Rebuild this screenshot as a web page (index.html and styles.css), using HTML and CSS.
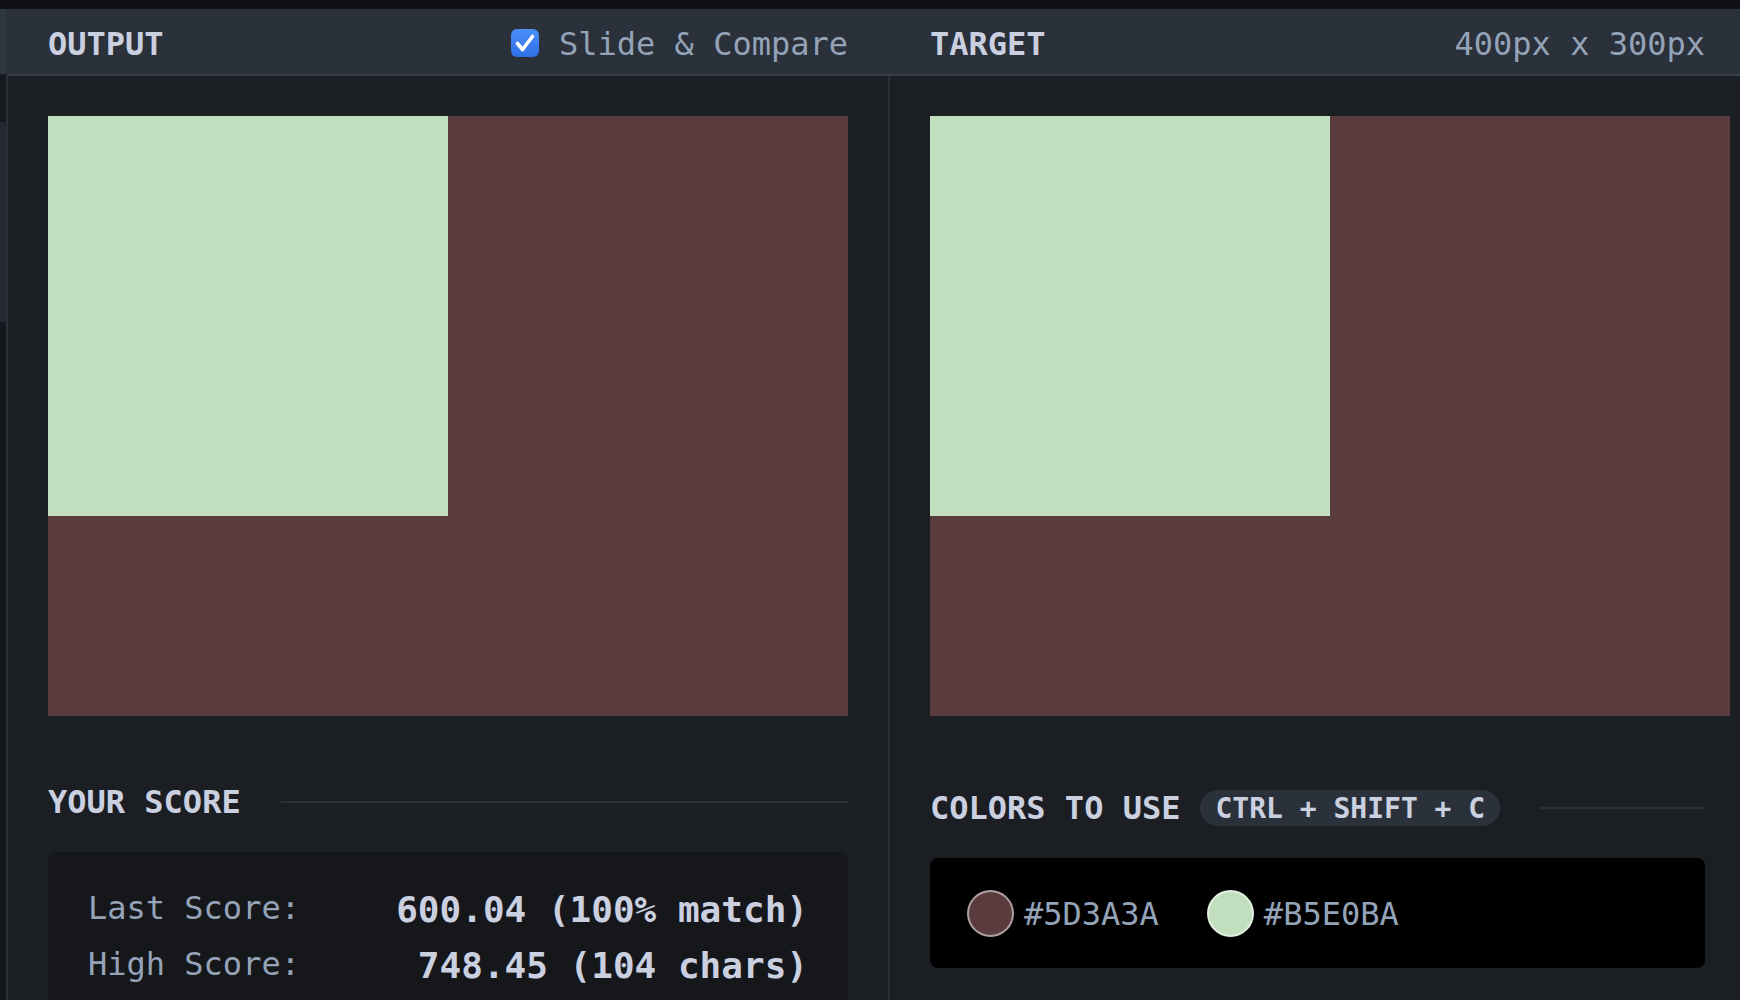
FILE: index.html
```html
<!DOCTYPE html>
<html lang="en">
<head>
<meta charset="utf-8">
<title>CSS Battle</title>
<link rel="stylesheet" href="styles.css">
</head>
<body>
<div class="topbar"></div>
<div class="app">
  <div class="rail">
    <div class="rail-top"></div>
    <div class="rail-gap"></div>
    <div class="rail-item"></div>
  </div>
  <div class="main">
    <div class="headers">
      <div class="head head-left">
        <span class="title">OUTPUT</span>
        <label class="toggle">
          <span class="check">
            <svg width="28" height="28" viewBox="0 0 28 28"><path d="M6.5 14.5 L11.5 20.5 L21.5 7.5" fill="none" stroke="#fff" stroke-width="3.6" stroke-linecap="round" stroke-linejoin="round"/></svg>
          </span>
          <span>Slide &amp; Compare</span>
        </label>
      </div>
      <div class="head head-right">
        <span class="title">TARGET</span>
        <span class="dims">400px x 300px</span>
      </div>
    </div>
    <div class="panels">
      <section class="panel panel-left">
        <div class="canvas"><div class="square"></div></div>
        <div class="section-head score-head">
          <h2>YOUR SCORE</h2>
          <div class="rule"></div>
        </div>
        <div class="score-box">
          <div class="score-row"><span class="label">Last Score:</span><span class="value">600.04 (100% match)</span></div>
          <div class="score-row"><span class="label">High Score:</span><span class="value">748.45 (104 chars)</span></div>
        </div>
      </section>
      <section class="panel panel-right">
        <div class="canvas"><div class="square"></div></div>
        <div class="section-head colors-head">
          <h2>COLORS TO USE <span class="kbd">CTRL + SHIFT + C</span></h2>
          <div class="rule"></div>
        </div>
        <div class="colors-box">
          <div class="color"><span class="swatch swatch-brown"></span><span>#5D3A3A</span></div>
          <div class="color"><span class="swatch swatch-green"></span><span>#B5E0BA</span></div>
        </div>
      </section>
    </div>
  </div>
</div>
</body>
</html>
```

FILE: styles.css
```css
html, body {
  margin: 0;
  padding: 0;
}

body {
  background: #1b1e22;
  font-family: "DejaVu Sans Mono", "Liberation Mono", monospace;
  height: 1000px;
  overflow: hidden;
}

.topbar {
  height: 9px;
  background: #0f1117;
}

.app {
  display: flex;
  height: 991px;
}

.rail {
  width: 6px;
  flex-shrink: 0;
  display: flex;
  flex-direction: column;
  background: #15171c;
}

.rail-top {
  height: 65px;
  background: #2e3740;
}

.rail-gap {
  height: 48px;
  background: #16191e;
}

.rail-item {
  height: 200px;
  background: #272733;
}

.main {
  flex: 1;
  min-width: 0;
  border-left: 2px solid #2b3038;
  display: flex;
  flex-direction: column;
}

.headers {
  display: flex;
  height: 65px;
  flex-shrink: 0;
  background: #2a313a;
  border-bottom: 2px solid #363e48;
}

.head {
  display: flex;
  align-items: center;
  justify-content: space-between;
  box-sizing: border-box;
  padding-top: 4px;
}

.head-left {
  width: 882px;
  padding-left: 40px;
  padding-right: 42px;
}

.head-right {
  flex: 1;
  padding-left: 40px;
  padding-right: 35px;
}

.title {
  font-size: 32px;
  font-weight: 700;
  color: #cbd0e0;
}

.toggle {
  display: flex;
  align-items: center;
  gap: 20px;
  font-size: 32px;
  color: #94a3b8;
}

.check {
  width: 28px;
  height: 28px;
  border-radius: 6px;
  background: linear-gradient(#4b90f9, #2f6fe6);
  display: flex;
  margin-top: -2px;
}

.dims {
  font-size: 32px;
  color: #94a3b8;
}

.panels {
  display: flex;
  flex: 1;
  min-height: 0;
}

.panel {
  box-sizing: border-box;
  padding: 40px 40px 0;
  overflow: hidden;
}

.panel-left {
  width: 882px;
  flex-shrink: 0;
  border-right: 2px solid #2b3038;
}

.panel-right {
  flex: 1;
  min-width: 0;
  padding-right: 35px;
}

.canvas {
  width: 800px;
  height: 600px;
  background: #5b3c3e;
}

.square {
  width: 400px;
  height: 400px;
  background: #c1dfbf;
}

.section-head {
  display: flex;
  align-items: center;
  gap: 40px;
  height: 40px;
}

.score-head {
  margin-top: 66px;
}

.colors-head {
  margin-top: 72px;
}

h2 {
  margin: 0;
  display: flex;
  align-items: center;
  white-space: nowrap;
  font-size: 32px;
  font-weight: 700;
  color: #cbd0e0;
}

.kbd {
  display: flex;
  align-items: center;
  height: 36px;
  margin-left: 20px;
  padding: 0 15px;
  border-radius: 18px;
  background: #2a313a;
  font-size: 28px;
}

.rule {
  flex: 1;
  height: 2px;
  background: #2b3139;
}

.score-box {
  margin-top: 30px;
  padding: 29px 40px;
  border-radius: 8px;
  background: #15171b;
}

.score-row {
  display: flex;
  align-items: center;
  justify-content: space-between;
  height: 56px;
}

.label {
  font-size: 32px;
  color: #94a3b8;
  margin-top: -3px;
}

.value {
  font-size: 36px;
  font-weight: 700;
  color: #cbd0e0;
}

.colors-box {
  margin-top: 30px;
  height: 110px;
  box-sizing: border-box;
  padding: 0 37px;
  display: flex;
  align-items: center;
  gap: 48px;
  border-radius: 8px;
  background: #000;
}

.color {
  display: flex;
  align-items: center;
  gap: 10px;
  font-size: 32px;
  color: #94a3b8;
}

.color span:last-child {
  margin-top: 2px;
}

.swatch {
  width: 47px;
  height: 47px;
  box-sizing: border-box;
  border-radius: 50%;
  border: 2px solid rgba(255, 255, 255, 0.5);
}

.swatch-brown {
  background: #5b3c3e;
}

.swatch-green {
  background: #c1dfbf;
}
```
